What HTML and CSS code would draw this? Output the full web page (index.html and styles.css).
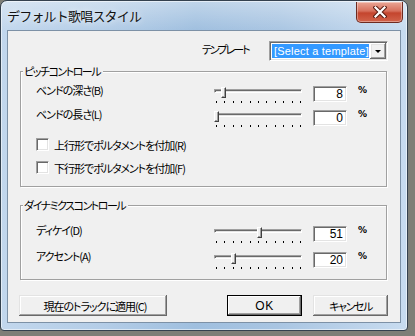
FILE: index.html
```html
<!DOCTYPE html>
<html lang="ja">
<head>
  <meta charset="UTF-8" />
  <title>デフォルト歌唱スタイル</title>
  <link rel="stylesheet" href="styles.css">
</head>
<body>

  <div class="window">
    <div class="titlebar">
      <span class="title">デフォルト歌唱スタイル</span>
      <button class="close" aria-label="閉じる">
        <svg width="14" height="12" viewBox="0 0 14 12">
          <path d="M2.5 1.5 L11.5 10.5 M11.5 1.5 L2.5 10.5" stroke="#5a1c12" stroke-width="4.2" stroke-linecap="square"/>
          <path d="M2.5 1.5 L11.5 10.5 M11.5 1.5 L2.5 10.5" stroke="#fff" stroke-width="2.2" stroke-linecap="square"/>
        </svg>
      </button>
    </div>

    <div class="client">
      <div class="template-row">
        <span class="template-label">テンプレート</span>
        <div class="combo">
          <span class="combo-text">[Select a template]</span>
          <span class="combo-btn"><span class="arrow"></span></span>
        </div>
      </div>

      <!-- Pitch -->
      <div class="group pitch">
        <span class="legend">ピッチコントロール</span>
        <div class="slider-row first">
          <span class="label">ベンドの深さ(B)</span>
          <div class="slider">
            <div class="track"></div>
            <div class="thumb" style="left:7px"></div>
            <div class="ticks"><i></i><i></i><i></i><i></i><i></i><i></i><i></i><i></i><i></i><i></i><i></i></div>
          </div>
          <span class="edit">8</span>
          <span class="unit">%</span>
        </div>
        <div class="slider-row second">
          <span class="label">ベンドの長さ(L)</span>
          <div class="slider">
            <div class="track"></div>
            <div class="thumb" style="left:0px"></div>
            <div class="ticks"><i></i><i></i><i></i><i></i><i></i><i></i><i></i><i></i><i></i><i></i><i></i></div>
          </div>
          <span class="edit">0</span>
          <span class="unit">%</span>
        </div>
        <label class="check up"><span class="box"></span>上行形でポルタメントを付加(R)</label>
        <label class="check down"><span class="box"></span>下行形でポルタメントを付加(F)</label>
      </div>

      <!-- Dynamics -->
      <div class="group dynamics">
        <span class="legend">ダイナミクスコントロール</span>
        <div class="slider-row first">
          <span class="label">ディケイ(D)</span>
          <div class="slider">
            <div class="track"></div>
            <div class="thumb" style="left:43px"></div>
            <div class="ticks"><i></i><i></i><i></i><i></i><i></i><i></i><i></i><i></i><i></i><i></i><i></i></div>
          </div>
          <span class="edit">51</span>
          <span class="unit">%</span>
        </div>
        <div class="slider-row second">
          <span class="label">アクセント(A)</span>
          <div class="slider">
            <div class="track"></div>
            <div class="thumb" style="left:17px"></div>
            <div class="ticks"><i></i><i></i><i></i><i></i><i></i><i></i><i></i><i></i><i></i><i></i><i></i></div>
          </div>
          <span class="edit">20</span>
          <span class="unit">%</span>
        </div>
      </div>

      <div class="buttons">
        <button class="btn apply">現在のトラックに適用(C)</button>
        <button class="btn ok">OK</button>
        <button class="btn cancel">キャンセル</button>
      </div>
    </div>
  </div>

</body>
</html>
```

FILE: styles.css
```css
* {
  box-sizing: border-box;
}
body {
  margin: 0;
  width: 415px;
  height: 336px;
  overflow: hidden;
  background: #7e7e77;
  font-family: "Noto Sans CJK JP", sans-serif;
  font-size: 11px;
  font-feature-settings: "palt";
  letter-spacing: -1px;
  color: #000;
}

/* window frame */
.window {
  width: 408px;
  height: 331px;
  display: flex;
  flex-direction: column;
  border: 1px solid #34414f;
  border-radius: 7px 7px 4px 4px;
  background:
    linear-gradient(180deg, rgba(255,255,255,0.35), rgba(255,255,255,0) 30px),
    linear-gradient(90deg, #c2d7ed 0%, #b4cde7 25%, #9fbfdf 48%, #a9c5e2 68%, #c8dcf0 100%);
  box-shadow: inset 0 0 0 1px rgba(255,255,255,0.55);
}
.titlebar {
  height: 29px;
  display: flex;
  justify-content: space-between;
  align-items: flex-start;
}
.title {
  margin: 6px 0 0 6px;
  font-size: 13px;
  line-height: 18px;
  letter-spacing: -0.8px;
  font-feature-settings: normal;
  color: #111;
  text-shadow: 0 0 6px rgba(255,255,255,0.9);
}
.close {
  margin: 1px 4px 0 0;
  width: 47px;
  height: 21px;
  padding: 0;
  display: flex;
  align-items: center;
  justify-content: center;
  border: 1px solid #6e2a20;
  border-top: none;
  border-radius: 0 0 5px 5px;
  background: linear-gradient(180deg, #e9a696 0%, #d7705c 45%, #c4452e 55%, #d2634b 100%);
  box-shadow: inset 0 0 0 1px rgba(255,255,255,0.35);
}

.client {
  margin: 0 6px;
  height: 293px;
  border: 1px solid #7d91a6;
  background: #f0f0f0;
}

/* template */
.template-row {
  margin-top: 10px;
  height: 20px;
  display: flex;
  padding: 0 12px 0 194px;
}
.template-label {
  margin-top: 1px;
  line-height: 14px;
  letter-spacing: -2px;
}
.combo {
  margin-left: auto;
  width: 119px;
  height: 20px;
  display: flex;
  align-items: center;
  padding: 0 1px 0 2px;
  background: #fff;
  border: 1px solid;
  border-color: #a0a0a0 #fff #fff #a0a0a0;
  box-shadow: inset 1px 1px #696969, inset -1px -1px #e3e3e3;
}
.combo-text {
  width: 97px;
  height: 14px;
  line-height: 14px;
  padding-left: 2px;
  white-space: nowrap;
  overflow: hidden;
  background: #3399ff;
  color: #fff;
  font-family: "Liberation Sans", sans-serif;
  font-size: 11px;
  letter-spacing: 0.2px;
}
.combo-btn {
  margin-left: auto;
  width: 16px;
  height: 16px;
  display: flex;
  align-items: center;
  justify-content: center;
  background: #f0f0f0;
  box-shadow: inset -1px -1px #696969, inset 1px 1px #fff, inset -2px -2px #a0a0a0, inset 2px 2px #e3e3e3;
}
.arrow {
  border-left: 3px solid transparent;
  border-right: 3px solid transparent;
  border-top: 3px solid #000;
  margin-top: 1px;
}

/* group boxes */
.group {
  margin-left: 12px;
  width: 367px;
  padding-left: 15px;
  border: 1px solid #a0a0a0;
  box-shadow: inset 1px 1px #fff, 1px 1px #fff;
}
.group.pitch {
  margin-top: 10px;
  padding-bottom: 12px;
}
.group.dynamics {
  margin-top: 18px;
  padding-bottom: 11px;
}
.legend {
  display: block;
  width: fit-content;
  margin: -8px 0 -6px -13px;
  padding: 0 3px 0 1px;
  height: 14px;
  line-height: 14px;
  background: #f0f0f0;
  letter-spacing: -1.5px;
}

.slider-row {
  display: grid;
  grid-template-columns: 167px 88px 34px 10px;
  column-gap: 11px;
  height: 16px;
}
.pitch .slider-row.first { margin-top: 14px; }
.pitch .slider-row.second { margin-top: 8px; }
.dynamics .slider-row.first { margin-top: 20px; }
.dynamics .slider-row.second { margin-top: 10px; }

.label {
  align-self: start;
  margin-top: -3px;
  line-height: 14px;
}

.slider {
  position: relative;
  height: 16px;
}
.track {
  margin-top: 3px;
  height: 4px;
  border: 1px solid;
  border-color: #a0a0a0 #fff #fff #a0a0a0;
  background: #e3e3e3;
  box-shadow: inset 1px 1px #696969;
}
.thumb {
  position: absolute;
  top: 1px;
  width: 5px;
  height: 11px;
  background: #f0f0f0;
  border: 1px solid;
  border-color: #fff #404040 #404040 #fff;
  box-shadow: inset -1px -1px #a0a0a0;
}
.ticks {
  margin: 8px 0 0 2px;
  width: 85px;
  height: 2px;
  display: flex;
  justify-content: space-between;
}
.ticks i {
  width: 1px;
  height: 2px;
  background: #000;
}

.edit {
  height: 16px;
  padding-right: 3px;
  text-align: right;
  font-family: "Liberation Sans", sans-serif;
  font-size: 12px;
  letter-spacing: 0;
  line-height: 15px;
  background: #fff;
  border: 1px solid;
  border-color: #a0a0a0 #fff #fff #a0a0a0;
  box-shadow: inset 1px 1px #696969, inset -1px -1px #e3e3e3;
}
.unit {
  align-self: start;
  margin-top: -1px;
  font-family: "DejaVu Sans", sans-serif;
  font-size: 9px;
  font-weight: bold;
  letter-spacing: 0;
  line-height: 10px;
}

/* check boxes */
.check {
  display: flex;
  align-items: center;
  height: 13px;
}
.check.up { margin-top: 12px; }
.check.down { margin-top: 10px; }
.check .box {
  width: 13px;
  height: 13px;
  margin-right: 5px;
  background: #fff;
  border: 1px solid;
  border-color: #a0a0a0 #fff #fff #a0a0a0;
  box-shadow: inset 1px 1px #696969, inset -1px -1px #e3e3e3;
}

/* buttons */
.buttons {
  margin-top: 15px;
  display: flex;
  gap: 11px;
  padding: 0 12px 0 11px;
}
.btn {
  height: 21px;
  padding: 0;
  border: none;
  background: #f0f0f0;
  font-family: "Noto Sans CJK JP", sans-serif;
  font-size: 11px;
  font-feature-settings: "palt";
  letter-spacing: -1px;
  color: #000;
  box-shadow: inset -1px -1px #696969, inset 1px 1px #e3e3e3, inset -2px -2px #a0a0a0, inset 2px 2px #fff;
}
.btn.apply {
  width: 148px;
  margin-right: auto;
  padding-left: 4px;
}
.btn.ok, .btn.cancel {
  width: 75px;
}
.btn.cancel {
  letter-spacing: -1.4px;
}
.btn.ok {
  font-family: "Liberation Sans", sans-serif;
  font-size: 12px;
  letter-spacing: 0.5px;
  box-shadow: inset 0 0 0 1px #000, inset -2px -2px #696969, inset 2px 2px #fff, inset -3px -3px #a0a0a0;
}
```
